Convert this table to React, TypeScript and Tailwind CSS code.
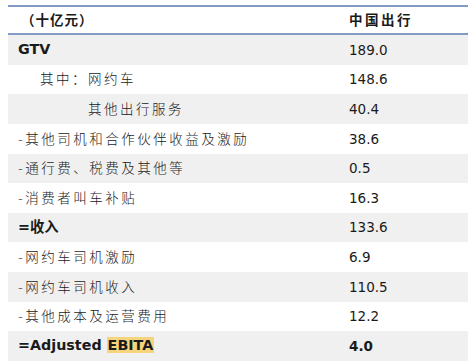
import React from 'react';

type Row = {
    label: React.ReactNode;
    value: string;
    bold?: boolean;
    valueBold?: boolean;
    indent?: string;
};

const cjk = "font-['DejaVu_Sans','Noto_Sans_CJK_SC',sans-serif]";

const rows: Row[] = [
    { label: 'GTV', value: '189.0', bold: true },
    { label: '其中：网约车', value: '148.6', indent: 'pl-[32px]' },
    { label: '其他出行服务', value: '40.4', indent: 'pl-[80px]' },
    { label: '-其他司机和合作伙伴收益及激励', value: '38.6' },
    { label: '-通行费、税费及其他等', value: '0.5' },
    { label: '-消费者叫车补贴', value: '16.3' },
    { label: '=收入', value: '133.6', bold: true },
    { label: '-网约车司机激励', value: '6.9' },
    { label: '-网约车司机收入', value: '110.5' },
    { label: '-其他成本及运营费用', value: '12.2' },
    {
        label: (
            <>
                =Adjusted <span className="bg-[#f6d47c] px-[1px]">EBITA</span>
            </>
        ),
        value: '4.0',
        bold: true,
        valueBold: true,
    },
];

export default function App() {
    return (
        <div className={`w-[468px] h-[362px] bg-white overflow-hidden pt-[5px] pl-[8px] text-[#1a1a1a] ${cjk}`}>
            <div className="border-t-2 border-b-2 border-[#8499c4] h-[30px] flex items-center font-bold text-[13.5px]">
                <div className="w-[341px] pl-[13px] tracking-[1px]">（十亿元）</div>
                <div className="tracking-[2.5px]">中国出行</div>
            </div>
            {rows.map((r, i) => (
                <div
                    key={i}
                    className={`h-[29.64px] flex items-center text-[13.5px] ${i % 2 === 0 ? 'bg-[#f0f0f0]' : 'bg-white'}`}
                >
                    <div className={`w-[341px] ${r.indent ?? 'pl-[10px]'} ${r.bold ? 'font-bold tracking-normal text-[14.3px]' : 'tracking-[2.5px] font-light'}`}>
                        {r.label}
                    </div>
                    <div className={r.valueBold ? 'font-bold' : 'font-normal'}>{r.value}</div>
                </div>
            ))}
        </div>
    );
}
